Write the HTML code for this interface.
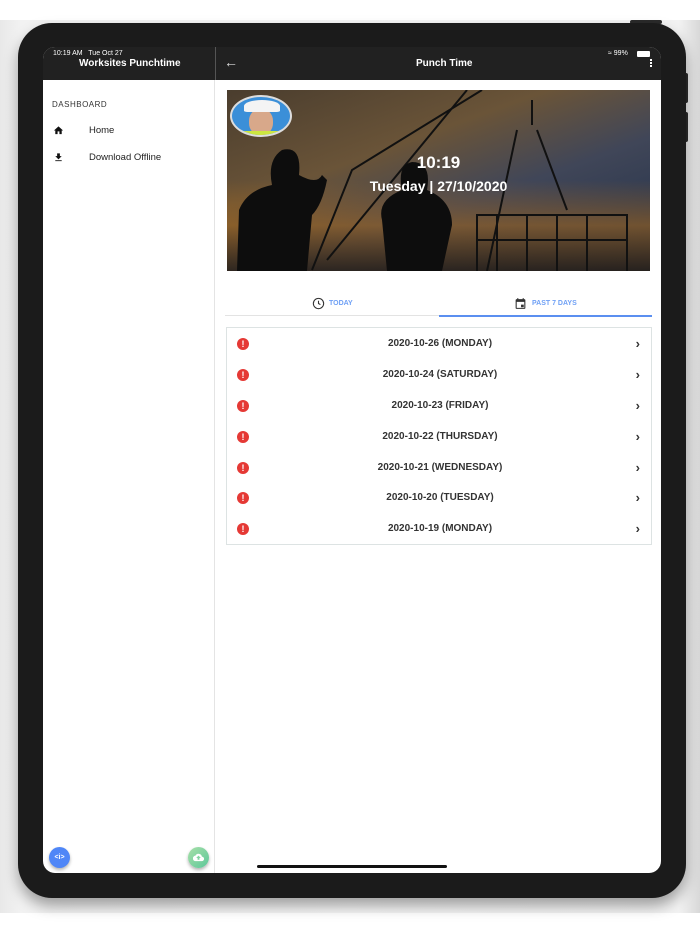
<!DOCTYPE html>
<html><head><meta charset="utf-8"><style>
*{margin:0;padding:0;box-sizing:border-box}
body{width:700px;height:934px;background:#fff;position:relative;overflow:hidden;font-family:"Liberation Sans",sans-serif}
.shadow{position:absolute;left:0;top:20px;width:700px;height:893px;background:linear-gradient(90deg,#e8e8e8,#f2f2f2 3%,#f6f6f6 50%,#f2f2f2 97%,#d8d8d8)}
.dev{position:absolute;left:18px;top:23px;width:668px;height:875px;background:#1b1b1b;border-radius:34px;box-shadow:0 8px 14px rgba(0,0,0,.35)}
.btn{position:absolute;background:#2a2a2a;border-radius:2px}
.screen{position:absolute;left:43px;top:47px;width:618px;height:826px;background:#fff;border-radius:12px;overflow:hidden}
.hdr{position:absolute;left:0;top:0;width:618px;height:33px;background:#212121}
.abs{position:absolute}
.side{position:absolute;left:0;top:33px;width:172px;height:793px;border-right:1px solid #e4e4e4}
.row{position:absolute;left:0;width:426px;height:31px}
.row .t{position:absolute;left:0;width:426px;text-align:center;top:10px;font-size:10px;font-weight:bold;color:#333}
.row .e{position:absolute;left:10px;top:10px;width:12px;height:12px;border-radius:50%;background:#e53935;color:#fff;font-size:9px;font-weight:bold;text-align:center;line-height:12px}
.row .c{position:absolute;right:13px;top:8px;font-size:13px;font-weight:bold;color:#333}
</style></head><body>
<div class="shadow"></div>
<div class="btn" style="left:630px;top:20px;width:32px;height:4px"></div>
<div class="btn" style="left:684px;top:73px;width:4px;height:30px"></div>
<div class="btn" style="left:684px;top:112px;width:4px;height:30px"></div>
<div class="dev"></div>
<div class="screen">
 <div class="hdr">
  <div class="abs" style="left:10px;top:3px;font-size:7px;color:#fff">10:19 AM&nbsp;&nbsp; Tue Oct 27</div>
  <div class="abs" style="left:36px;top:11px;font-size:10px;font-weight:bold;color:#fff">Worksites Punchtime</div>
  <div class="abs" style="left:172px;top:0;width:1px;height:33px;background:#555"></div>
  <div class="abs" style="left:181px;top:7px;font-size:14px;color:#ddd">&#8592;</div>
  <div class="abs" style="left:373px;top:11px;font-size:10px;font-weight:bold;color:#fff">Punch Time</div>
  <div class="abs" style="left:565px;top:3px;font-size:7px;color:#fff">&#8776; 99%</div>
  <div class="abs" style="left:594px;top:4px;width:13px;height:6px;background:#fff;border-radius:1px"></div>
  <div class="abs" style="left:607px;top:12px;width:2px;height:2px;background:#fff;box-shadow:0 3px #fff,0 6px #fff"></div>
 </div>
 <div class="side">
  <div class="abs" style="left:9px;top:20px;font-size:8px;letter-spacing:.5px;color:#333">DASHBOARD</div>
  <svg class="abs" style="left:10px;top:45px" width="11" height="11" viewBox="0 0 24 24"><path d="M10 20v-6h4v6h5v-8h3L12 3 2 12h3v8z" fill="#111"/></svg>
  <div class="abs" style="left:46px;top:45px;font-size:9.5px;color:#222">Home</div>
  <svg class="abs" style="left:10px;top:72px" width="11" height="11" viewBox="0 0 24 24"><path d="M19 9h-4V3H9v6H5l7 7 7-7zM5 18v2h14v-2z" fill="#111"/></svg>
  <div class="abs" style="left:46px;top:72px;font-size:9.5px;color:#222">Download Offline</div>
  <div class="abs" style="left:6px;top:767px;width:21px;height:21px;border-radius:50%;background:#4f86f7;box-shadow:0 2px 3px rgba(0,0,0,.3);color:#fff;font-size:7px;text-align:center;line-height:21px;font-weight:bold">&lt;i&gt;</div>
  <div class="abs" style="left:145px;top:767px;width:21px;height:21px;border-radius:50%;background:linear-gradient(135deg,#a8e0a8,#5cc79a);box-shadow:0 2px 3px rgba(0,0,0,.3)"><svg style="margin:5px" width="11" height="11" viewBox="0 0 24 24"><path d="M19.4 10A7.5 7.5 0 0 0 5.4 8 6 6 0 0 0 6 20h13a5 5 0 0 0 .4-10zM14 13v4h-4v-4H7l5-5 5 5z" fill="#fff"/></svg></div>
 </div>
 <!-- hero -->
 <div class="abs" style="left:184px;top:43px;width:423px;height:181px;overflow:hidden;background:linear-gradient(160deg,#4a3d2e 0%,#6a5438 35%,#404658 60%,#1f2e48 100%)">
  <div class="abs" style="left:0;top:90px;width:423px;height:91px;background:linear-gradient(180deg,rgba(0,0,0,0),rgba(170,105,25,.55) 50%,rgba(40,30,20,.8))"></div>
  <svg class="abs" style="left:0;top:0" width="423" height="181" viewBox="0 0 423 181">
   <g stroke="#111" fill="none" stroke-width="2"><path d="M85 180L125 80 255 0"/><path d="M100 170L240 0"/><path d="M305 10L305 35M290 40L260 181M310 40L340 120"/><path d="M250 181V125H400V181M270 125V181M300 125V181M330 125V181M360 125V181M250 150H400"/></g>
   <path d="M10 181L12 120Q20 100 45 95Q40 70 55 60Q75 55 72 85Q90 95 95 85L100 90Q95 115 85 125L80 181Z" fill="#0d0d0d"/>
   <path d="M160 181L155 130Q150 110 175 100Q170 75 185 72Q205 72 200 100Q225 110 225 135L215 181Z" fill="#0d0d0d"/>
  </svg>
  <div class="abs" style="left:3px;top:5px;width:62px;height:42px;border-radius:50%;background:#3b8fd8;border:2px solid #ddd;overflow:hidden"><div class="abs" style="left:17px;top:12px;width:24px;height:26px;border-radius:45%;background:#d8a88a"></div><div class="abs" style="left:12px;top:3px;width:36px;height:12px;border-radius:50% 50% 10% 10%;background:#f4f4f4"></div><div class="abs" style="left:10px;top:34px;width:40px;height:10px;background:#cde640"></div></div>
  <div class="abs" style="left:0;width:423px;top:63px;text-align:center;color:#fff;font-size:17px;font-weight:bold">10:19</div>
  <div class="abs" style="left:0;width:423px;top:88px;text-align:center;color:#fff;font-size:14px;font-weight:bold">Tuesday | 27/10/2020</div>
 </div>
 <!-- tabs -->
 <svg class="abs" style="left:269px;top:250px" width="13" height="13" viewBox="0 0 24 24"><circle cx="12" cy="12" r="9.5" fill="none" stroke="#333" stroke-width="2"/><path d="M12 7v5l3.5 2" fill="none" stroke="#333" stroke-width="2"/></svg>
 <div class="abs" style="left:286px;top:253px;font-size:7px;font-weight:bold;color:#6fa0f5">TODAY</div>
 <svg class="abs" style="left:471px;top:250px" width="13" height="13" viewBox="0 0 24 24"><path d="M19 4h-1V2h-2v2H8V2H6v2H5a2 2 0 0 0-2 2v14a2 2 0 0 0 2 2h14a2 2 0 0 0 2-2V6a2 2 0 0 0-2-2zm0 16H5V9h14zm-6-6h5v5h-5z" fill="#333"/></svg>
 <div class="abs" style="left:489px;top:253px;font-size:7px;font-weight:bold;color:#6fa0f5">PAST 7 DAYS</div>
 <div class="abs" style="left:182px;top:268px;width:214px;height:1px;background:#e3e3e3"></div>
 <div class="abs" style="left:396px;top:268px;width:213px;height:2px;background:#5b8ff0"></div>
 <!-- list -->
 <div class="abs" style="left:183px;top:280px;width:426px;height:218px;border:1px solid #dde3e3">
  <div class="row" style="top:0"><div class="e">!</div><div class="t">2020-10-26 (MONDAY)</div><div class="c">&#8250;</div></div>
  <div class="row" style="top:31px"><div class="e">!</div><div class="t">2020-10-24 (SATURDAY)</div><div class="c">&#8250;</div></div>
  <div class="row" style="top:62px"><div class="e">!</div><div class="t">2020-10-23 (FRIDAY)</div><div class="c">&#8250;</div></div>
  <div class="row" style="top:93px"><div class="e">!</div><div class="t">2020-10-22 (THURSDAY)</div><div class="c">&#8250;</div></div>
  <div class="row" style="top:124px"><div class="e">!</div><div class="t">2020-10-21 (WEDNESDAY)</div><div class="c">&#8250;</div></div>
  <div class="row" style="top:154px"><div class="e">!</div><div class="t">2020-10-20 (TUESDAY)</div><div class="c">&#8250;</div></div>
  <div class="row" style="top:185px"><div class="e">!</div><div class="t">2020-10-19 (MONDAY)</div><div class="c">&#8250;</div></div>
 </div>
 <div class="abs" style="left:214px;top:818px;width:190px;height:3px;border-radius:2px;background:#111"></div>
</div>
</body></html>
